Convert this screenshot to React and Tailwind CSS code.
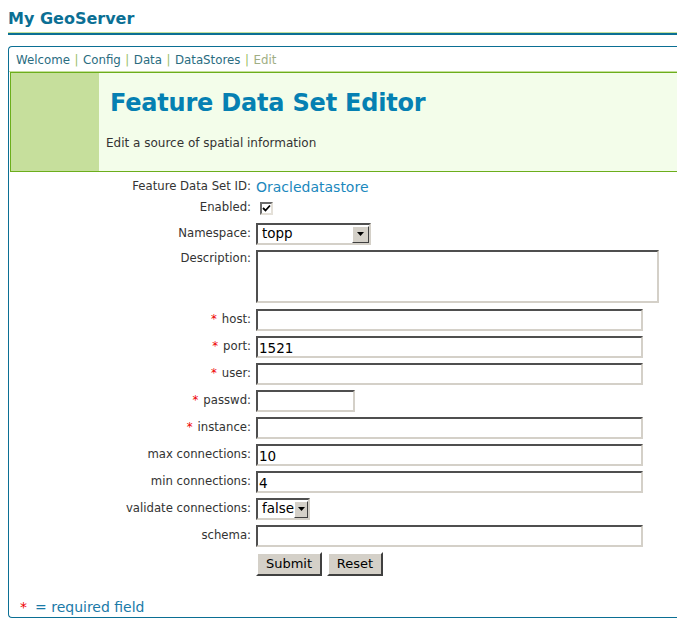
import React from "react";

const font = { fontFamily: '"DejaVu Sans", Verdana, sans-serif' };

function Inset({ className = "", children }) {
  return (
    <div
      className={`bg-white border-2 border-t-[#4f4f4f] border-l-[#4f4f4f] border-b-[#d4d0c8] border-r-[#d4d0c8] ${className}`}
    >
      {children}
    </div>
  );
}

function Arrow() {
  return (
    <div className="w-[17px] h-[17px] bg-[#d4d0c8] border border-t-white border-l-white border-b-[#404040] border-r-[#404040] flex items-center justify-center">
      <svg width="7" height="4" viewBox="0 0 7 4">
        <polygon points="0,0 7,0 3.5,4" fill="#000" />
      </svg>
    </div>
  );
}

function Select({ value, className }) {
  return (
    <Inset className={`h-[22px] flex items-center justify-between ${className}`}>
      <span className="pl-[4px] text-[13.5px] text-black leading-none">{value}</span>
      <Arrow />
    </Inset>
  );
}

function Row({ label, req, children, className = "", top = false }) {
  return (
    <div className={`flex ${top ? "items-start" : "items-center"} ${className}`}>
      <div className="w-[242px] text-right text-[11.7px] text-[#333]">
        {req && <span className="text-[#e00] mr-[5px]">*</span>}
        {label}
      </div>
      <div className="ml-[5px]">{children}</div>
    </div>
  );
}

function TextInput({ w = "w-[387px]", value = "" }) {
  return (
    <Inset className={`h-[22px] ${w} flex items-center`}>
      <span className="pl-[1px] pt-[3px] text-[13.5px] text-black leading-none">{value}</span>
    </Inset>
  );
}

function Button({ children, w }) {
  return (
    <div
      className={`h-[24px] ${w} bg-[#d4d0c8] border-2 border-t-white border-l-white border-b-[#404040] border-r-[#404040] flex items-center justify-center text-[13px] text-black`}
    >
      {children}
    </div>
  );
}

function Sep() {
  return <span className="text-[#9cbf6a] mx-[4.5px]">|</span>;
}

export default function App() {
  return (
    <div className="w-[677px] h-[631px] overflow-hidden bg-white" style={font}>
      <div className="pl-[8px]">
        <div className="h-[32px] pt-[9px] text-[16px] font-bold text-[#0b6f94] leading-[20px]">
          My GeoServer
        </div>
        <div className="h-[1px] bg-[#c5df9b]" />
        <div className="h-[2px] bg-[#0b6f94]" />
      </div>

      <div className="ml-[8px] mt-[11px] h-[572px] border border-r-0 border-[#0b6f94] rounded-l-[4px] flex flex-col">
        <div className="h-[25px] pt-[3px] border-b border-[#c5df9b] flex items-center pl-[7px] text-[11.8px] text-[#2a6c7f]">
          <span>Welcome</span>
          <Sep />
          <span>Config</span>
          <Sep />
          <span>Data</span>
          <Sep />
          <span>DataStores</span>
          <Sep />
          <span className="text-[#a0ae84]">Edit</span>
        </div>

        <div className="ml-[1px] h-[100px] border-t border-b border-l border-[#6cae1c] flex">
          <div className="w-[88px] bg-[#c6df9c]" />
          <div className="flex-1 bg-[#f3fdea] pl-[7px]">
            <div className="pt-[15px] pl-[4px] text-[24px] font-bold text-[#0580b2] leading-[30px] tracking-[-0.2px]">
              Feature Data Set Editor
            </div>
            <div className="mt-[17px] text-[12px] text-[#333] leading-[16px]">
              Edit a source of spatial information
            </div>
          </div>
        </div>

        <div className="pt-[6px] flex flex-col">
          <Row label="Feature Data Set ID:" className="h-[18px]">
            <span className="text-[14px] text-[#1b88bd]">Oracledatastore</span>
          </Row>
          <Row label="Enabled:" className="h-[16px] mt-[4px]">
            <div className="ml-[4px] w-[13px] h-[13px] bg-white border-2 border-t-[#6a6a6a] border-l-[#6a6a6a] border-b-[#e4e0d8] border-r-[#e4e0d8] flex items-center justify-center">
              <svg width="9" height="9" viewBox="0 0 9 9">
                <path d="M1 4 L3.5 6.5 L8 1.5" stroke="#000" strokeWidth="1.8" fill="none" />
              </svg>
            </div>
          </Row>
          <Row label="Namespace:" className="h-[22px] mt-[7px]">
            <Select value="topp" className="w-[115px]" />
          </Row>
          <Row label="Description:" className="mt-[5px]" top>
            <Inset className="w-[403px] h-[53px]" />
          </Row>
          <Row label="host:" req className="mt-[6px]">
            <TextInput />
          </Row>
          <Row label="port:" req className="mt-[5px]">
            <TextInput value="1521" />
          </Row>
          <Row label="user:" req className="mt-[5px]">
            <TextInput />
          </Row>
          <Row label="passwd:" req className="mt-[5px]">
            <TextInput w="w-[99px]" />
          </Row>
          <Row label="instance:" req className="mt-[5px]">
            <TextInput />
          </Row>
          <Row label="max connections:" className="mt-[5px]">
            <TextInput value="10" />
          </Row>
          <Row label="min connections:" className="mt-[5px]">
            <TextInput value="4" />
          </Row>
          <Row label="validate connections:" className="mt-[5px]">
            <Select value="false" className="w-[54px]" />
          </Row>
          <Row label="schema:" className="mt-[5px]">
            <TextInput />
          </Row>
          <Row label="" className="mt-[5px]">
            <div className="flex gap-[5px]">
              <Button w="w-[66px]">Submit</Button>
              <Button w="w-[56px]">Reset</Button>
            </div>
          </Row>
        </div>

        <div className="mt-auto mb-[1px] pl-[11px] text-[14px] text-[#1a7aa8] leading-[18px]">
          <span className="text-[#e00]">*</span>
          <span className="ml-[8px]">= required field</span>
        </div>
      </div>
    </div>
  );
}
